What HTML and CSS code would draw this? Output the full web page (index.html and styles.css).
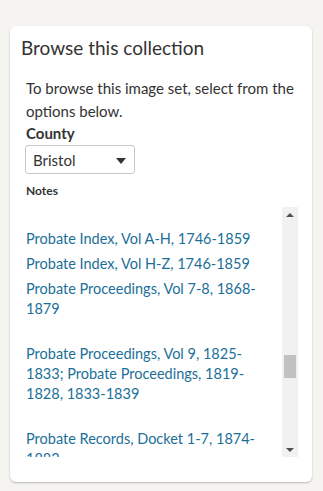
FILE: index.html
```html
<!DOCTYPE html>
<html>
<head>
    <title>Browse this collection</title>
    <link rel="stylesheet" href="styles.css">
</head>
<body>
    <div class="panel">
        <h2 class="panel-title">Browse this collection</h2>
        <div class="panel-body">
            <p class="intro">To browse this image set, select from the options below.</p>
            <label class="field-label" for="county">County</label>
            <div class="select-wrap">
                <select class="select" id="county">
                    <option>Bristol</option>
                </select>
            </div>
            <div class="notes-label">Notes</div>
            <div class="notes">
                <ul class="notes-list">
                    <li><a href="#">Probate Index, Vol A-H, 1746-1859</a></li>
                    <li><a href="#">Probate Index, Vol H-Z, 1746-1859</a></li>
                    <li class="gap"><a href="#">Probate Proceedings, Vol 7-8, 1868-1879</a></li>
                    <li class="gap"><a href="#">Probate Proceedings, Vol 9, 1825-1833; Probate Proceedings, 1819-1828, 1833-1839</a></li>
                    <li class="gap"><a href="#">Probate Records, Docket 1-7, 1874-1883</a></li>
                </ul>
                <div class="scrollbar">
                    <div class="arrow arrow-up"></div>
                    <div class="track">
                        <div class="thumb"></div>
                    </div>
                    <div class="arrow arrow-down"></div>
                </div>
            </div>
        </div>
    </div>
</body>
</html>
```

FILE: styles.css
```css
body {
    margin: 0;
    padding: 26px 11px 9px 10px;
    background-color: #f5f4f1;
    font-family: Lato, "Noto Sans", sans-serif;
    color: #333;
}

.panel {
    width: 302px;
    box-sizing: border-box;
    background-color: #fff;
    border-radius: 6px;
    box-shadow: 0 1px 2px rgba(0, 0, 0, 0.25);
    padding: 10px 14px 25px 11px;
}

.panel-title {
    margin: 0;
    font-size: 19px;
    line-height: 24px;
    font-weight: normal;
}

.panel-body {
    padding-left: 5px;
}

.intro {
    margin: 17px 0 0;
    font-size: 15px;
    line-height: 23px;
}

.field-label {
    display: block;
    font-size: 15px;
    line-height: 20px;
    font-weight: bold;
}

.select-wrap {
    position: relative;
    width: 110px;
    margin: 2px 0 0 -1px;
}

.select {
    display: block;
    width: 110px;
    height: 29px;
    box-sizing: border-box;
    appearance: none;
    -webkit-appearance: none;
    border: 1px solid #c8c8c8;
    border-radius: 3px;
    background: #fff;
    padding: 0 0 0 7px;
    font-family: inherit;
    font-size: 15px;
    color: #333;
}

.select-wrap::after {
    content: "";
    position: absolute;
    left: 91px;
    top: 13px;
    border-left: 5px solid transparent;
    border-right: 5px solid transparent;
    border-top: 6px solid #333;
}

.notes-label {
    margin-top: 9px;
    font-size: 12px;
    line-height: 16px;
    font-weight: bold;
}

.notes {
    display: flex;
    height: 250px;
    margin-top: 8px;
}

.notes-list {
    flex: 1;
    margin: 0;
    padding: 22px 15px 0 0;
    list-style: none;
    overflow: hidden;
    font-size: 14.5px;
    line-height: 20px;
}

.notes-list li {
    margin-bottom: 5px;
}

.notes-list li.gap {
    padding-bottom: 20px;
}

.notes-list a {
    color: #1b6f98;
    text-decoration: none;
}

.scrollbar {
    width: 16px;
    display: flex;
    flex-direction: column;
    background-color: #f1f1f1;
}

.arrow {
    height: 15px;
    display: flex;
    justify-content: center;
    align-items: center;
}

.arrow::before {
    content: "";
    border-left: 4px solid transparent;
    border-right: 4px solid transparent;
}

.arrow-up::before {
    border-bottom: 4px solid #505050;
}

.arrow-down::before {
    border-top: 4px solid #505050;
}

.track {
    flex: 1;
}

.thumb {
    width: 12px;
    height: 23px;
    margin: 133px auto 0;
    background-color: #c1c1c1;
}
```
